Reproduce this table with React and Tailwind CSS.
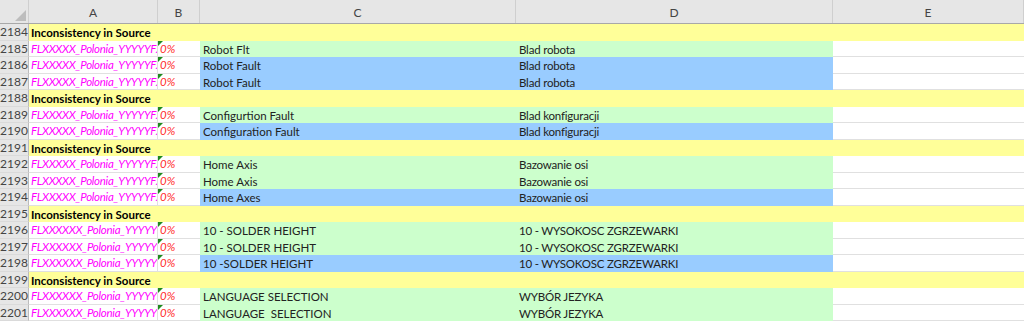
const rows = [
  { n: 2184, type: "head" },
  { n: 2185, a: "FLXXXXX_Polonia_YYYYYFXXXX", c: "Robot Flt", d: "Blad robota", bg: "g" },
  { n: 2186, a: "FLXXXXX_Polonia_YYYYYFXXXX", c: "Robot Fault", d: "Blad robota", bg: "b" },
  { n: 2187, a: "FLXXXXX_Polonia_YYYYYFXXXX", c: "Robot Fault", d: "Blad robota", bg: "b" },
  { n: 2188, type: "head" },
  { n: 2189, a: "FLXXXXX_Polonia_YYYYYFXXXX", c: "Configurtion Fault", d: "Blad konfiguracji", bg: "g" },
  { n: 2190, a: "FLXXXXX_Polonia_YYYYYFXXXX", c: "Configuration Fault", d: "Blad konfiguracji", bg: "b" },
  { n: 2191, type: "head" },
  { n: 2192, a: "FLXXXXX_Polonia_YYYYYFXXXX", c: "Home Axis", d: "Bazowanie osi", bg: "g" },
  { n: 2193, a: "FLXXXXX_Polonia_YYYYYFXXXX", c: "Home Axis", d: "Bazowanie osi", bg: "g" },
  { n: 2194, a: "FLXXXXX_Polonia_YYYYYFXXXX", c: "Home Axes", d: "Bazowanie osi", bg: "b" },
  { n: 2195, type: "head" },
  { n: 2196, a: "FLXXXXXX_Polonia_YYYYYYXXXX", c: "10 - SOLDER HEIGHT", d: "10 - WYSOKOSC ZGRZEWARKI", bg: "g" },
  { n: 2197, a: "FLXXXXXX_Polonia_YYYYYYXXXX", c: "10 - SOLDER HEIGHT", d: "10 - WYSOKOSC ZGRZEWARKI", bg: "g" },
  { n: 2198, a: "FLXXXXXX_Polonia_YYYYYYXXXX", c: "10 -SOLDER HEIGHT", d: "10 - WYSOKOSC ZGRZEWARKI", bg: "b" },
  { n: 2199, type: "head" },
  { n: 2200, a: "FLXXXXXX_Polonia_YYYYYYXXXX", c: "LANGUAGE SELECTION", d: "WYBÓR JEZYKA", bg: "g" },
  { n: 2201, a: "FLXXXXXX_Polonia_YYYYYYXXXX", c: "LANGUAGE  SELECTION", d: "WYBÓR JEZYKA", bg: "g" },
]

const RowNum = ({ n }) => (
  <div className="w-[29px] shrink-0 h-full bg-[#e6e6e6] border-r border-[#bcbcbc] border-b border-b-[#dadada] text-right pr-[2px] text-[#444] text-[12px] leading-[16px]">
    {n}
  </div>
)

const ColHead = ({ label, w }) => (
  <div className={`${w} h-full flex items-center justify-center border-r border-[#cfcfcf] text-[#444] text-[12px] pt-[2px]`}>
    {label}
  </div>
)

export default function App() {
  return (
    <div className="w-[1024px] h-[321px] overflow-hidden bg-white text-[11.5px] text-[#222]" style={{ fontFamily: "Lato, 'Liberation Sans', sans-serif" }}>
      <div className="flex h-[24px] bg-[#e6e6e6] border-b border-[#a8a8a8]">
        <div className="w-[29px] shrink-0 h-full relative border-r border-[#cfcfcf]">
          <svg className="absolute right-[2px] bottom-[2px]" width="11" height="11" viewBox="0 0 11 11">
            <polygon points="11,0 11,11 0,11" fill="#bdbdbd" />
          </svg>
        </div>
        <ColHead label="A" w="w-[129px] shrink-0" />
        <ColHead label="B" w="w-[42px] shrink-0" />
        <ColHead label="C" w="w-[316px] shrink-0" />
        <ColHead label="D" w="w-[317px] shrink-0" />
        <ColHead label="E" w="flex-1" />
      </div>
      {rows.map((r) =>
        r.type === "head" ? (
          <div key={r.n} className="flex h-[16.5px]">
            <RowNum n={r.n} />
            <div className="flex-1 h-full bg-[#ffff99] font-bold pl-[2px] leading-[17px] text-black">
              Inconsistency in Source
            </div>
          </div>
        ) : (
          <div key={r.n} className="flex h-[16.5px]">
            <RowNum n={r.n} />
            <div className="w-[129px] shrink-0 h-full overflow-hidden whitespace-nowrap border-b border-r border-[#e0e0e0] pl-[2px] italic tracking-[-0.3px] text-[#ff00ff] leading-[16px]">
              {r.a}
            </div>
            <div className="w-[42px] shrink-0 h-full relative border-b border-[#e0e0e0] pl-[2px] italic text-[#ff2a2a] leading-[16px]">
              <span className="absolute left-0 top-0 w-0 h-0 border-t-[5px] border-t-[#1e8a1e] border-r-[5px] border-r-transparent" />
              0%
            </div>
            <div className={`w-[316px] shrink-0 h-full whitespace-pre pl-[3px] leading-[17px] ${r.bg === "g" ? "bg-[#ccffcc]" : "bg-[#99ccff]"}`}>
              {r.c}
            </div>
            <div className={`w-[317px] shrink-0 h-full whitespace-pre pl-[3px] leading-[17px] tracking-[-0.2px] ${r.bg === "g" ? "bg-[#ccffcc]" : "bg-[#99ccff]"}`}>
              {r.d}
            </div>
            <div className="flex-1 h-full border-b border-[#e0e0e0]" />
          </div>
        )
      )}
    </div>
  )
}
